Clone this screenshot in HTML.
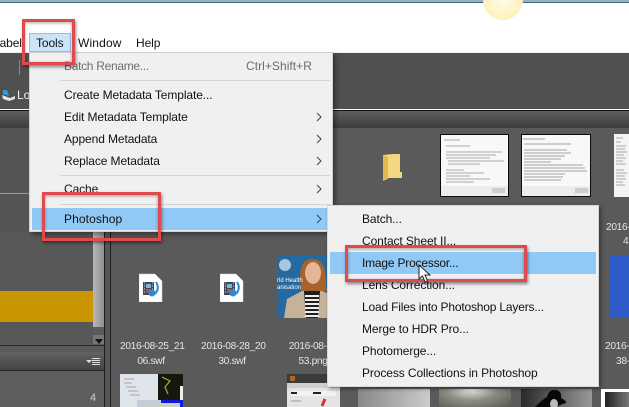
<!DOCTYPE html>
<html><head><meta charset="utf-8"><style>
html,body{margin:0;padding:0}
body{width:629px;height:407px;overflow:hidden;position:relative;background:#5a5a5a;font-family:"Liberation Sans",sans-serif}
div,span.t,span.l{position:absolute}
.t{white-space:nowrap;font-size:12px;line-height:16px;color:#111;letter-spacing:-.1px}
.l{white-space:nowrap;font-size:10.2px;line-height:15px;color:#e4e4e4;text-align:center;letter-spacing:-.35px}
.r{border:3px solid #e04a4f;box-shadow:1px 2px 3px rgba(0,0,0,.45),inset 0 1px 3px rgba(0,0,0,.35);box-sizing:border-box}
svg{position:absolute}
</style></head><body>
<div style="left:0;top:0;width:629px;height:2px;background:#a9adb2"></div>
<div style="left:0;top:2px;width:629px;height:1px;background:#2f6f9e"></div>
<div style="left:0;top:3px;width:629px;height:49px;background:#fff"></div>
<div style="left:0;top:52px;width:629px;height:1px;background:#eee"></div>
<div style="left:483px;top:-20px;width:40px;height:40px;border-radius:50%;background:radial-gradient(circle,#fffbe8 0,#fdf3c0 65%,#fbe9a0 100%)"></div>

<div style="left:0;top:53px;width:629px;height:56px;background:#505050"></div>
<div style="left:19px;top:60px;width:1px;height:15px;background:#888"></div>
<div style="left:0;top:109px;width:629px;height:1px;background:#fff"></div>
<div style="left:0;top:110px;width:629px;height:1px;background:#111"></div>
<div style="left:0;top:111px;width:629px;height:17px;background:linear-gradient(#5e5e5e,#3c3c3c)"></div>
<div style="left:0;top:128px;width:105px;height:104px;background:#555"></div>
<div style="left:0;top:193px;width:30px;height:1px;background:#999"></div>
<svg style="left:1px;top:89px" width="15" height="13" viewBox="0 0 15 13"><path d="M1 6L9 9L14 7L14 10L8 12L2 10Z" fill="#dfe3e6"/><path d="M2 1L6 1L8 7L2 5Z" fill="#2f9be0"/></svg>
<span class="t" style="left:17px;top:87px;color:#eee">Lo</span>

<!-- left panels -->
<div style="left:0;top:232px;width:93px;height:59px;background:#585858"></div>
<div style="left:0;top:291px;width:93px;height:31px;background:#c99500"></div>
<div style="left:0;top:322px;width:93px;height:22px;background:#585858"></div>
<div style="left:93px;top:232px;width:11px;height:95px;background:linear-gradient(90deg,#b8b8b8,#8f8f8f)"></div>
<div style="left:93px;top:335px;width:11px;height:9px;background:#777"></div>
<div style="left:95px;top:339px;width:0;height:0;border:4px solid transparent;border-top:5px solid #111;border-bottom:0"></div>
<div style="left:0;top:345px;width:105px;height:1px;background:#2a2a2a"></div>
<div style="left:0;top:352px;width:105px;height:18px;background:linear-gradient(#626262,#444)"></div>
<div style="left:0;top:370px;width:105px;height:1px;background:#222"></div>
<div style="left:0;top:371px;width:105px;height:36px;background:#5e5e5e"></div>
<div style="left:86px;top:360px;width:0;height:0;border:3px solid transparent;border-top:3px solid #ddd;border-bottom:0"></div>
<div style="left:92px;top:358px;width:8px;height:1px;background:#ddd;box-shadow:0 2px #ddd,0 4px #ddd,0 6px #ddd"></div>
<span class="l" style="left:90px;top:391px;color:#ccc;font-size:11px">4</span>
<div style="left:104px;top:232px;width:1px;height:175px;background:#1e1e1e"></div>
<div style="left:105px;top:232px;width:5px;height:175px;background:#565656"></div>
<div style="left:110px;top:232px;width:1px;height:175px;background:#1e1e1e"></div>

<!-- folder -->
<svg style="left:383px;top:153px" width="20" height="28" viewBox="0 0 20 28"><path d="M0 2L10 1H17V19H19V25H4L0 27Z" fill="#f5d77f"/><path d="M0 2L5 4V26L0 28Z" fill="#e2b94f"/></svg>

<!-- document thumbs -->
<svg style="left:440px;top:134px" width="70" height="64" viewBox="0 0 70 64"><rect x=".5" y=".5" width="68" height="62" fill="#f8f8f8" stroke="#0a0a0a"/><path d="M4 6H20M6 12H30M6 18H62M6 21H56M6 24H50M8 27H64M8 30H40M6 36H24M6 39H44M6 42H30M6 45H50M6 48H34" stroke="#aaa" fill="none"/><rect x="1" y="52" width="67" height="10" fill="#ececec"/><rect x="52" y="54" width="13" height="5" fill="#ccc"/></svg>
<svg style="left:521px;top:134px" width="71" height="64" viewBox="0 0 71 64"><rect x=".5" y=".5" width="69" height="62" fill="#f8f8f8" stroke="#0a0a0a"/><path d="M2 5H24M3 10H50M3 16H46M3 19H50M3 22H44M3 25H40M3 28H30M3 31H62M3 34H64M3 37H66M3 40H44M3 43H42M3 46H40" stroke="#a2a2a2" fill="none"/><rect x="1" y="52" width="68" height="10" fill="#ececec"/><rect x="54" y="54" width="13" height="5" fill="#ccc"/></svg>
<svg style="left:614px;top:134px" width="15" height="63" viewBox="0 0 15 63"><rect width="15" height="63" fill="#f4f4f4"/><path d="M2 4H9M2 8H7M2 12H12M2 15H11M2 18H13M2 21H10M2 24H12M2 27H9M2 30H12M2 36H10M2 39H13M2 42H11M2 45H12M2 48H9M2 51H11" stroke="#a8a8a8"/></svg>

<!-- swf icons -->
<svg style="left:139px;top:273px" width="24" height="29" viewBox="0 0 24 29"><path d="M0 1H16L23 8V29H0Z" fill="#fff" stroke="#d5d5d5" stroke-width=".5"/><rect x="4" y="9" width="11" height="13" fill="#3d4a5c"/><path d="M5 10H6M5 13H6M5 16H6M5 19H6M13 10H14M13 13H14M13 16H14M13 19H14" stroke="#ddd"/><rect x="7" y="11" width="5" height="4" fill="#7cb4d8"/><rect x="7" y="16" width="5" height="4" fill="#b05060"/><circle cx="13" cy="20" r="3.5" fill="#2a8ad4"/><path d="M17 9Q21 15 16 21" stroke="#2a8ad4" stroke-width="2" fill="none"/></svg>
<svg style="left:220px;top:273px" width="24" height="29" viewBox="0 0 24 29"><path d="M0 1H16L23 8V29H0Z" fill="#fff" stroke="#d5d5d5" stroke-width=".5"/><rect x="4" y="9" width="11" height="13" fill="#3d4a5c"/><path d="M5 10H6M5 13H6M5 16H6M5 19H6M13 10H14M13 13H14M13 16H14M13 19H14" stroke="#ddd"/><rect x="7" y="11" width="5" height="4" fill="#7cb4d8"/><rect x="7" y="16" width="5" height="4" fill="#b05060"/><circle cx="13" cy="20" r="3.5" fill="#2a8ad4"/><path d="M17 9Q21 15 16 21" stroke="#2a8ad4" stroke-width="2" fill="none"/></svg>

<!-- woman photo -->
<svg style="left:277px;top:255px" width="50" height="63" viewBox="0 0 50 63">
<rect width="50" height="63" fill="#24699f"/><circle cx="8" cy="10" r="6" fill="#a9c6dc"/>
<path d="M24 30Q20 4 36 4Q50 5 49 30L50 36H24Z" fill="#a8622c"/>
<ellipse cx="36" cy="18" rx="8" ry="11" fill="#e6b496"/>
<path d="M7 63L10 44L25 36H45L50 38V63Z" fill="#c4b299"/>
<path d="M27 36H43L41 63H29Z" fill="#1f1f1f"/>
<path d="M28 41H42M28 45H42M28 49H42M28 53H42M28 57H42M28 61H42" stroke="#eee" stroke-width="2"/>
<text x="0" y="27" font-size="6" fill="#fff" font-family="Liberation Sans">rld Health</text>
<text x="0" y="34" font-size="6" fill="#fff" font-family="Liberation Sans">anisation</text>
</svg>
<div style="left:610px;top:255px;width:19px;height:63px;background:#2f5cc8"></div>

<!-- labels -->
<span class="l" style="left:120px;top:339px;width:62px">2016-08-25_21</span>
<span class="l" style="left:120px;top:354px;width:62px">06.swf</span>
<span class="l" style="left:201px;top:339px;width:62px">2016-08-28_20</span>
<span class="l" style="left:201px;top:354px;width:62px">30.swf</span>
<span class="l" style="left:282px;top:339px;width:62px">2016-08-31</span>
<span class="l" style="left:282px;top:354px;width:62px">53.png</span>
<span class="l" style="left:605px;top:339px">2016-</span>
<span class="l" style="left:616px;top:354px">38-</span>
<span class="l" style="left:606px;top:220px">2016-</span>
<span class="l" style="left:623px;top:234px">4</span>

<!-- bottom thumbs -->
<svg style="left:120px;top:374px" width="64" height="33" viewBox="0 0 64 33"><rect width="38" height="33" fill="#dfe3ea"/><rect x="38" width="25" height="26" fill="#15180e"/><path d="M42 3L50 7L45 13L48 20" stroke="#b5a634" stroke-width="1.2" fill="none"/><rect x="60" y="12" width="3" height="14" fill="#eee"/><path d="M4 5H14M4 9H12M6 13H16M8 17H18M10 21H20" stroke="#a5a5a5"/><rect x="17" y="26" width="30" height="7" fill="#c4ccd8"/><rect x="41" y="26" width="22" height="7" fill="#1018d8"/><rect x="24" y="29" width="36" height="4" fill="#ccc"/></svg>
<svg style="left:287px;top:374px" width="53" height="33" viewBox="0 0 53 33"><rect width="53" height="33" fill="#e4e4e4"/><rect width="53" height="9" fill="#3b3b3b"/><rect y="9" width="53" height="5" fill="#cfcfcf"/><rect x="3" y="2" width="5" height="5" fill="#a56a20"/><rect x="4" y="17" width="45" height="5" fill="#f2f2f2"/><path d="M4 19H10M26 19H34" stroke="#222" stroke-width="2"/><path d="M35 32L38 25" stroke="#d8333a" stroke-width="3"/><path d="M4 27H14" stroke="#999"/></svg>
<div style="left:358px;top:389px;width:72px;height:18px;background:linear-gradient(90deg,#888,#ccc)"></div>
<div style="left:439px;top:389px;width:72px;height:18px;background:radial-gradient(ellipse at 45% 0,#e8ece8 0,#8c8f84 45%,#55584c 100%)"></div>
<div style="left:521px;top:389px;width:71px;height:18px;background:linear-gradient(90deg,#2a2a2a,#999)"></div>
<svg style="left:521px;top:389px" width="71" height="18" viewBox="0 0 71 18"><path d="M14 18Q22 10 26 8Q28 0 35 1Q41 2 40 9Q46 12 45 14Q38 16 36 18Z" fill="#080808"/><ellipse cx="33" cy="15" rx="4" ry="5" fill="#bbb"/></svg>
<div style="left:601px;top:389px;width:28px;height:18px;background:#fff"></div>
<div style="left:605px;top:392px;width:24px;height:15px;background:linear-gradient(90deg,#222,#777)"></div>

<!-- main menu -->
<div style="left:29px;top:52px;width:304px;height:180px;background:#f0f0f0;border:1px solid #d0d0d0;box-sizing:border-box;box-shadow:3px 3px 4px rgba(0,0,0,.35)"></div>
<div style="left:60px;top:80px;width:270px;height:1px;background:#d5d5d5"></div>
<div style="left:60px;top:175px;width:270px;height:1px;background:#d5d5d5"></div>
<div style="left:60px;top:204px;width:270px;height:1px;background:#d5d5d5"></div>
<div style="left:32px;top:208px;width:295px;height:22px;background:#90c8f6"></div>
<span class="t" style="left:64px;top:58px;color:#6d6d6d;letter-spacing:-.3px">Batch Rename...</span>
<span class="t" style="left:246px;top:58px;color:#6d6d6d;letter-spacing:.05px">Ctrl+Shift+R</span>
<span class="t" style="left:64px;top:87px">Create Metadata Template...</span>
<span class="t" style="left:64px;top:109px">Edit Metadata Template</span>
<span class="t" style="left:64px;top:131px">Append Metadata</span>
<span class="t" style="left:64px;top:153px">Replace Metadata</span>
<span class="t" style="left:64px;top:181px">Cache</span>
<span class="t" style="left:64px;top:211px;letter-spacing:.1px">Photoshop</span>
<svg style="left:316px;top:112px" width="8" height="114" viewBox="0 0 8 114" fill="none" stroke="#444" stroke-width="1"><path d="M1 1L5 5L1 9M1 23L5 27L1 31M1 45L5 49L1 53M1 73L5 77L1 81M1 103L5 107L1 111"/></svg>

<!-- top menu -->
<span class="t" style="left:-7px;top:35px">Label</span>
<div style="left:29px;top:33px;width:42px;height:19px;background:#cce4f8;border:1px solid #90c0e6;box-sizing:border-box"></div>
<span class="t" style="left:36px;top:35px">Tools</span>
<span class="t" style="left:78px;top:35px;letter-spacing:.15px">Window</span>
<span class="t" style="left:136px;top:35px">Help</span>

<!-- submenu -->
<div style="left:327px;top:205px;width:272px;height:182px;background:#f0f0f0;border:1px solid #d8d8d8;box-sizing:border-box;box-shadow:2px 2px 4px rgba(0,0,0,.4)"></div>
<div style="left:330px;top:252px;width:266px;height:22px;background:#90c8f6"></div>
<span class="t" style="left:362px;top:211px">Batch...</span>
<span class="t" style="left:362px;top:233px">Contact Sheet II...</span>
<span class="t" style="left:362px;top:255px;letter-spacing:-.2px">Image Processor...</span>
<span class="t" style="left:362px;top:277px">Lens Correction...</span>
<span class="t" style="left:362px;top:299px;letter-spacing:-.18px">Load Files into Photoshop Layers...</span>
<span class="t" style="left:362px;top:321px">Merge to HDR Pro...</span>
<span class="t" style="left:362px;top:343px">Photomerge...</span>
<span class="t" style="left:362px;top:365px">Process Collections in Photoshop</span>

<!-- red highlight boxes -->
<div class="r" style="left:22px;top:19px;width:53px;height:46px"></div>
<div class="r" style="left:42px;top:192px;width:119px;height:49px"></div>
<div class="r" style="left:345px;top:245px;width:182px;height:37px"></div>

<!-- cursor -->
<svg style="left:418px;top:264px" width="13" height="19" viewBox="0 0 13 19"><path d="M1 1V15L4.5 12L7 18L9.5 17L7 11H12Z" fill="#fff" stroke="#222" stroke-width="1"/></svg>
</body></html>
